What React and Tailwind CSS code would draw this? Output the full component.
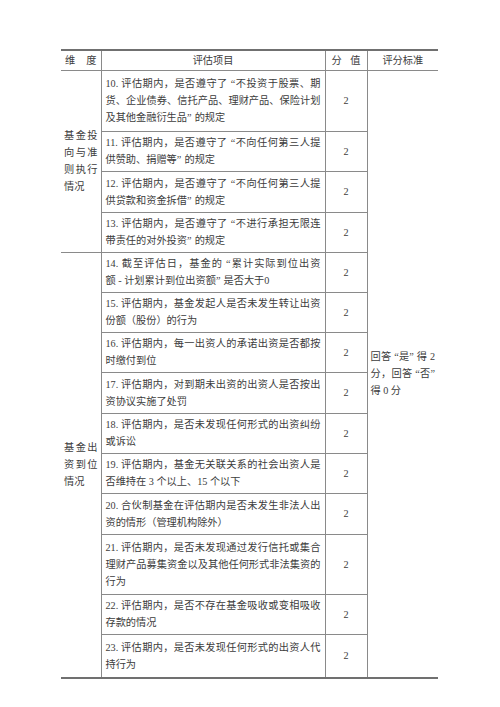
import React from 'react';

// 评估表：基金投向与准则执行情况 / 基金出资到位情况
const rows = [
  {
    h: 'h-[61px]',
    dim: { span: 4, lines: ['基金投', '向与准', '则执行', '情况'] },
    lines: ['10. 评估期内，是否遵守了“不投资于股票、期', '货、企业债券、信托产品、理财产品、保险计划', '及其他金融衍生品”的规定'],
  },
  { h: 'h-[40px]', lines: ['11. 评估期内，是否遵守了“不向任何第三人提', '供赞助、捐赠等”的规定'] },
  { h: 'h-[41px]', lines: ['12. 评估期内，是否遵守了“不向任何第三人提', '供贷款和资金拆借”的规定'] },
  { h: 'h-[40px]', lines: ['13. 评估期内，是否遵守了“不进行承担无限连', '带责任的对外投资”的规定'] },
  {
    h: 'h-[40px]',
    dim: { span: 10, lines: ['基金出', '资到位', '情况'] },
    lines: ['14. 截至评估日，基金的“累计实际到位出资', '额 - 计划累计到位出资额”是否大于0'],
  },
  { h: 'h-[40px]', lines: ['15. 评估期内，基金发起人是否未发生转让出资', '份额（股份）的行为'] },
  { h: 'h-[40px]', lines: ['16. 评估期内，每一出资人的承诺出资是否都按', '时缴付到位'] },
  { h: 'h-[41px]', lines: ['17. 评估期内，对到期未出资的出资人是否按出', '资协议实施了处罚'] },
  { h: 'h-[40px]', lines: ['18. 评估期内，是否未发现任何形式的出资纠纷', '或诉讼'] },
  { h: 'h-[40px]', lines: ['19. 评估期内，基金无关联关系的社会出资人是', '否维持在 3 个以上、15 个以下'] },
  { h: 'h-[41px]', lines: ['20. 合伙制基金在评估期内是否未发生非法人出', '资的情形（管理机构除外）'] },
  {
    h: 'h-[60px]',
    lines: ['21. 评估期内，是否未发现通过发行信托或集合', '理财产品募集资金以及其他任何形式非法集资的', '行为'],
  },
  { h: 'h-[40px]', lines: ['22. 评估期内，是否不存在基金吸收或变相吸收', '存款的情况'] },
  { h: 'h-[44px]', lines: ['23. 评估期内，是否未发现任何形式的出资人代', '持行为'] },
];

// quotes take a wider box, as in the printed Song type
function withQuotes(text) {
  return text.split(/([“”])/).map((part, i) => {
    if (part === '“')
      return (
        <span key={i} className="inline-block w-[0.75em] text-right [text-align-last:right]">
          “
        </span>
      );
    if (part === '”')
      return (
        <span key={i} className="inline-block w-[0.75em] text-left [text-align-last:left]">
          ”
        </span>
      );
    return part;
  });
}

function Lines({ lines, wide = true }) {
  return lines.map((line, i) => (
    <span
      key={i}
      className={i < lines.length - 1 ? 'block text-justify [text-align-last:justify]' : 'block text-left'}
    >
      {wide ? withQuotes(line) : line}
    </span>
  ));
}

export default function App() {
  return (
    <div className="min-h-[707px] bg-white pt-[49px] pl-[61px] font-['Liberation_Serif','Noto_Sans_CJK_SC',serif] text-[10.2px] leading-[17px] text-[#3c3c3c]">
      <table className="w-[377px] table-fixed border-collapse border-y-2 border-[#707070]">
        <colgroup>
          <col className="w-[40px]" />
          <col className="w-[224px]" />
          <col className="w-[42px]" />
          <col className="w-[71px]" />
        </colgroup>
        <thead>
          <tr className="h-[20px]">
            <th className="border-r border-b border-[#8a8a8a] px-[4px] font-normal">
              <div className="flex justify-between">
                <span>维</span>
                <span>度</span>
              </div>
            </th>
            <th className="border-r border-b border-[#8a8a8a] text-center font-normal">评估项目</th>
            <th className="border-r border-b border-[#8a8a8a] px-[6px] font-normal">
              <div className="flex justify-between">
                <span>分</span>
                <span>值</span>
              </div>
            </th>
            <th className="border-b border-[#8a8a8a] text-center font-normal">评分标准</th>
          </tr>
        </thead>
        <tbody>
          {rows.map((row, idx) => (
            <tr key={idx} className={row.h}>
              {row.dim && (
                <td
                  rowSpan={row.dim.span}
                  className="border-r border-b border-[#8a8a8a] px-[3px] align-middle"
                >
                  <Lines lines={row.dim.lines} />
                </td>
              )}
              <td className="border-r border-b border-[#8a8a8a] px-[4px] align-middle">
                <Lines lines={row.lines} />
              </td>
              <td className="border-r border-b border-[#8a8a8a] text-center align-middle">2</td>
              {idx === 0 && (
                <td rowSpan={rows.length} className="px-[3px] align-middle">
                  <Lines lines={['回答 “是” 得 2', '分，回答 “否”', '得 0 分']} wide={false} />
                </td>
              )}
            </tr>
          ))}
        </tbody>
      </table>
    </div>
  );
}
